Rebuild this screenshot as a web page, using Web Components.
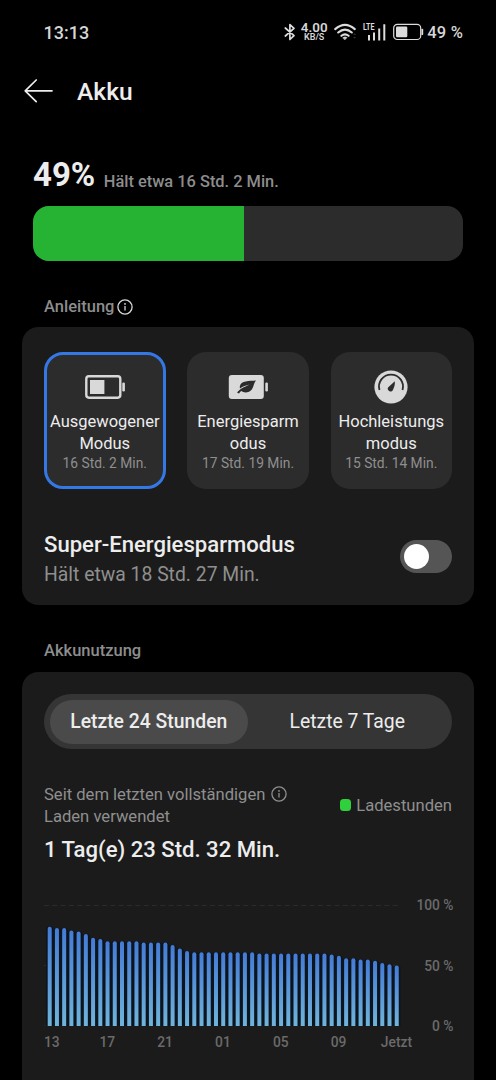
<!DOCTYPE html>
<html lang="de">
<head>
<meta charset="utf-8">
<title>Akku</title>
<style>
    html { background: #000; }
    body {
        margin: 0;
        width: 496px;
        height: 1080px;
        overflow: hidden;
        background: #000;
        color: #ededed;
        font-family: Roboto, "Liberation Sans", sans-serif;
    }
</style>
</head>
<body>

<battery-page></battery-page>

<script>
/** @class StatusBar */
class StatusBar extends HTMLElement {
    constructor() {
        super();
        this.attachShadow({ mode: 'open' });
        this.shadowRoot.innerHTML = `
        <style>
            :host {
                display: flex;
                align-items: center;
                justify-content: space-between;
                box-sizing: border-box;
                height: 64px;
                padding: 0 33px 0 43.5px;
                color: #d6d6d6;
                font-weight: 500;
            }
            .time { font-size: 18px; }
            .icons { display: flex; align-items: center; }
            svg { display: block; fill: none; stroke: #dcdcdc; }
            .speed {
                display: flex;
                flex-direction: column;
                align-items: center;
                width: 28px;
                margin: 0 6px 0 4px;
            }
            .speed b { font-size: 13.4px; font-weight: 600; line-height: 11px; }
            .speed span { font-size: 9px; font-weight: 600; line-height: 9px; }
            .signal { margin: 0 7px 0 5px; }
            .signal text {
                fill: #dcdcdc;
                stroke: none;
                font: 700 9px Roboto, sans-serif;
            }
            .percent { margin-left: 3px; font-size: 16.5px; letter-spacing: 0.2px; white-space: nowrap; }
        </style>
        <div class="time"><slot name="time"></slot></div>
        <div class="icons">
            <svg width="12" height="18" viewBox="0 0 12 18" stroke-width="1.7" stroke-linejoin="round" stroke-linecap="round">
                <path d="M1.3 5 L10 12.6 L5.9 16.5 V1.5 L10 5.4 L1.3 13"/>
            </svg>
            <div class="speed"><b>4.00</b><span>KB/S</span></div>
            <svg width="24" height="18" viewBox="0 0 24 18" stroke-width="2.1" stroke-linecap="round">
                <path d="M1.2 6.1 Q11 -2.5 20.8 6.1 M4.2 9.5 Q11 3.6 17.8 9.5 M7.4 12.8 Q11 9.8 14.6 12.8"/>
                <path d="M9.1 14.6 Q11 13.2 12.9 14.6 L11 16.6 Z" fill="#dcdcdc" stroke-width="0.7"/>
                <path d="M19 11.8 l1.6 -1.6 1.6 1.6z M19 14 l1.6 1.6 1.6 -1.6z" fill="#333" stroke="none"/>
            </svg>
            <svg class="signal" width="23" height="20" viewBox="0 0 23 20" stroke-width="2">
                <text x="0" y="7.8" textLength="11.5" lengthAdjust="spacingAndGlyphs">LTE</text>
                <path d="M6 18.6 V13 M11 18.6 V10.4 M16.2 18.6 V6.5 M21.3 18.6 V2.2"/>
            </svg>
            <svg width="31" height="18" viewBox="0 0 31 18" stroke-width="1.2">
                <rect x="0.7" y="1.3" width="27" height="15.2" rx="3.6"/>
                <rect x="3" y="3.6" width="11.3" height="10.6" rx="1.2" fill="#dcdcdc" stroke="none"/>
                <path d="M29.3 6.6 V11.2" stroke-width="1.8" stroke-linecap="round"/>
            </svg>
            <div class="percent"><slot name="percent"></slot></div>
        </div>`; }
}

/** @class TitleBar */
class TitleBar extends HTMLElement {
    constructor() {
        super();
        this.attachShadow({ mode: 'open' });
        this.shadowRoot.innerHTML = `
        <style>
            :host {
                display: flex;
                align-items: center;
                gap: 24px;
                height: 54px;
                padding-left: 24px;
            }
            svg { display: block; }
            h1 { margin: 1px 0 0; font-size: 24.6px; font-weight: 500; line-height: 30px; }
        </style>
        <svg width="29" height="24" viewBox="0 0 29 24" fill="none" stroke="#ededed" stroke-width="1.7" stroke-linecap="round" stroke-linejoin="round">
            <path d="M28 11.8 H1.2 M12.2 1 L1.2 11.8 L12.2 22.6"/>
        </svg>
        <h1><slot></slot></h1>`; }
}

/** @class BatteryLevel */
class BatteryLevel extends HTMLElement {
    constructor() {
        super();
        this.attachShadow({ mode: 'open' });
        this.shadowRoot.innerHTML = `
        <style>
            :host { display: block; padding: 37px 33px 0; }
            .text { display: flex; align-items: baseline; gap: 8.5px; height: 50.5px; line-height: 40px; }
            .level { font-size: 33px; font-weight: 700; }
            .rest { position: relative; top: 1px; color: #8d8d8d; font-size: 16.4px; font-weight: 500; }
            .track { height: 55px; border-radius: 16px; background: #2c2c2c; overflow: hidden; }
            .fill { height: 100%; background: #26b334; }
        </style>
        <div class="text">
            <span class="level"></span>
            <span class="rest"><slot></slot></span>
        </div>
        <div class="track"><div class="fill"></div></div>`; }

    connectedCallback() {
        const level = this.getAttribute( 'level' );
        this.shadowRoot.querySelector( '.level' ).textContent = level + '%';
        this.shadowRoot.querySelector( '.fill'  ).style.width = level + '%'; }
}

/** @class InfoIcon */
class InfoIcon extends HTMLElement {
    constructor() {
        super();
        this.attachShadow({ mode: 'open' });
        this.shadowRoot.innerHTML = `
        <style>
            :host { display: inline-block; width: 16px; height: 16px; }
            svg { display: block; width: 100%; height: 100%; }
        </style>
        <svg viewBox="0 0 16 16" fill="none" stroke="currentColor" stroke-width="1.3">
            <circle cx="8" cy="8" r="7.1"/>
            <path d="M8 7 V11.6"/>
            <circle cx="8" cy="4.9" r="0.9" fill="currentColor" stroke="none"/>
        </svg>`; }
}

/** @class SectionLabel */
class SectionLabel extends HTMLElement {
    constructor() {
        super();
        this.attachShadow({ mode: 'open' });
        this.shadowRoot.innerHTML = `
        <style>
            :host {
                display: flex;
                align-items: center;
                gap: 3px;
                box-sizing: border-box;
                padding-left: 44px;
                color: #8d8d8d;
                font-size: 16.5px;
                font-weight: 500;
                line-height: 20px;
            }
            ::slotted(info-icon) { color: #d8d8d8; }
        </style>
        <slot></slot>`; }
}

/** @class PanelCard */
class PanelCard extends HTMLElement {
    constructor() {
        super();
        this.attachShadow({ mode: 'open' });
        this.shadowRoot.innerHTML = `
        <style>
            :host {
                display: block;
                box-sizing: border-box;
                margin: 0 22px;
                padding: 0 22px;
                border-radius: 16.5px;
                background: #1b1b1b;
            }
        </style>
        <slot></slot>`; }
}

/** @class ModeTile */
class ModeTile extends HTMLElement {
    constructor() {
        super();
        this.attachShadow({ mode: 'open' });
        this.shadowRoot.innerHTML = `
        <style>
            :host {
                display: flex;
                flex-direction: column;
                align-items: center;
                box-sizing: border-box;
                height: 137px;
                padding-top: 14px;
                border: 3px solid transparent;
                border-radius: 19px;
                background: #2c2c2c;
                background-clip: border-box;
                text-align: center;
            }
            :host([selected]) { border-color: #3478e5; }
            .icon { display: flex; align-items: center; height: 36px; margin-bottom: 6px; }
            .name { font-size: 16.5px; line-height: 22px; white-space: nowrap; }
            .time { margin-top: -1px; color: #8f8f8f; font-size: 13.8px; line-height: 18px; white-space: nowrap; }
        </style>
        <div class="icon"><slot name="icon"></slot></div>
        <div class="name"><slot></slot></div>
        <div class="time"><slot name="time"></slot></div>`; }
}

/** @class ToggleRow */
class ToggleRow extends HTMLElement {
    constructor() {
        super();
        this.attachShadow({ mode: 'open' });
        this.shadowRoot.innerHTML = `
        <style>
            :host { display: flex; align-items: flex-start; justify-content: space-between; }
            .title { font-size: 22.1px; font-weight: 500; line-height: 30px; }
            .sub { color: #8f8f8f; font-size: 19.35px; line-height: 31px; }
            .switch {
                display: flex;
                align-items: center;
                box-sizing: border-box;
                width: 52px;
                height: 33px;
                margin-top: 11px;
                padding: 0 3.5px;
                border-radius: 17px;
                background: #555;
            }
            .knob { width: 25px; height: 25px; border-radius: 50%; background: #fff; }
        </style>
        <div>
            <div class="title"><slot></slot></div>
            <div class="sub"><slot name="sub"></slot></div>
        </div>
        <div class="switch"><div class="knob"></div></div>`; }
}

/** @class TabSwitch */
class TabSwitch extends HTMLElement {
    constructor() {
        super();
        this.attachShadow({ mode: 'open' });
        this.shadowRoot.innerHTML = `
        <style>
            :host {
                display: grid;
                grid-template-columns: 1fr 1fr;
                box-sizing: border-box;
                height: 55px;
                padding: 5.5px;
                border-radius: 28px;
                background: #353535;
            }
            ::slotted(*) {
                display: flex;
                align-items: center;
                justify-content: center;
                border-radius: 22px;
                font-size: 19.35px;
            }
            ::slotted([selected]) { background: #4a4a4a; font-weight: 500; }
        </style>
        <slot></slot>`; }
}

/** @class UsageSummary */
class UsageSummary extends HTMLElement {
    constructor() {
        super();
        this.attachShadow({ mode: 'open' });
        this.shadowRoot.innerHTML = `
        <style>
            :host { display: block; color: #8f8f8f; font-size: 16.6px; line-height: 22.4px; }
            .row { display: flex; justify-content: space-between; align-items: center; }
            .since { display: flex; gap: 6px; }
            .since info-icon { margin-top: 2px; }
            .legend { display: flex; align-items: center; gap: 5px; }
            .dot { width: 11.5px; height: 11.5px; margin-top: -3px; border-radius: 3.5px; background: #2fd03c; }
            .total { margin-top: 5px; color: #ededed; font-size: 22.1px; font-weight: 500; line-height: 30px; }
        </style>
        <div class="row">
            <div class="since"><div><slot name="since"></slot></div><info-icon></info-icon></div>
            <div class="legend"><div class="dot"></div><slot name="legend"></slot></div>
        </div>
        <div class="total"><slot name="total"></slot></div>`; }
}

/** @class UsageChart */
class UsageChart extends HTMLElement {
    constructor() {
        super();
        this.attachShadow({ mode: 'open' });
        this.shadowRoot.innerHTML = `
        <style>
            :host {
                display: grid;
                grid-template-columns: 357px 1fr;
                color: #6a6a6a;
                font-size: 13.8px;
                font-weight: 500;
                line-height: 18px;
            }
            svg { display: block; }
            .scale {
                display: flex;
                flex-direction: column;
                justify-content: space-between;
                height: 139px;
                margin-top: -8.5px;
                margin-right: -1.5px;
                text-align: right;
            }
            .hours { display: flex; margin-top: -2.5px; }
            .hours span { display: flex; flex: 0 0 57.84px; justify-content: center; }
            .hours span:first-child { flex-basis: 34.4px; justify-content: flex-start; }
        </style>
        <svg width="357" height="121" viewBox="0 0 357 121"></svg>
        <div class="scale"><span>100 %</span><span>50 %</span><span>0 %</span></div>
        <div class="hours"></div>`; }

    connectedCallback() {
        const levels = this.getAttribute( 'levels' ).split( ',' ).map( Number );
        const hours  = this.getAttribute( 'hours'  ).split( ',' );
        const column = ( level, i, left, width ) => {
            const x = ( left + i * 7.23 ).toFixed( 2 );
            const y = ( 123 - level * 1.21 ).toFixed( 2 );
            const r = width / 2;
            return `<path d="M${ x } 121 V${ y } q0 -2 ${ r } -2 t${ r } 2 V121 z"/>`; };
        const bars   = levels.map( ( level, i ) => column( level, i, 3.7, 4   ) ).join( '' );
        const gutter = levels.map( ( level, i ) => column( level, i, 2.1, 7.3 ) ).join( '' );

        this.shadowRoot.querySelector( 'svg' ).innerHTML = `
            <linearGradient id="bar" x1="0" y1="0" x2="0" y2="1">
                <stop offset="0" stop-color="#447bd6"/>
                <stop offset="1" stop-color="#70b4da"/>
            </linearGradient>
            <path d="M0 0.5 H356 M0 60.5 H356" stroke="#2b2b2b" stroke-dasharray="5 3.3"/>
            <path d="M0 120.5 H356" stroke="#242424"/>
            <g fill="#0c151f">${ gutter }</g>
            <g fill="url(#bar)">${ bars }</g>`;
        this.shadowRoot.querySelector( '.hours' ).innerHTML = hours.map( h => `<span>${ h }</span>` ).join( '' ); }
}

/** @class BatteryPage */
class BatteryPage extends HTMLElement {
    constructor() {
        super();
        this.attachShadow({ mode: 'open' });
        this.shadowRoot.innerHTML = `
        <style>
            :host { display: block; }
            .guide { height: 44.5px; margin-top: 22px; padding-top: 4px; }
            .usage-label { height: 67px; padding-top: 25px; }
            .modes-card { height: 278px; padding-top: 25px; }
            .modes { display: grid; grid-template-columns: repeat(3, 121.5px); justify-content: space-between; }
            toggle-row { margin-top: 40px; }
            .usage-card { height: 440px; padding-top: 22px; }
            usage-summary { margin-top: 35px; }
            usage-chart { margin-top: 41px; }
            svg { display: block; }
        </style>
        <status-bar>
            <span slot="time">13:13</span>
            <span slot="percent">49 %</span>
        </status-bar>
        <title-bar>Akku</title-bar>
        <battery-level level="49">Hält etwa 16 Std. 2 Min.</battery-level>

        <section-label class="guide">Anleitung<info-icon></info-icon></section-label>
        <panel-card class="modes-card">
            <div class="modes">
                <mode-tile selected>
                    <svg slot="icon" width="40" height="24" viewBox="0 0 40 24">
                        <rect x="1.3" y="1.3" width="34" height="21.4" rx="2.6" fill="none" stroke="#d9d9d9" stroke-width="2.4"/>
                        <rect x="5" y="5" width="14.4" height="14" fill="#d9d9d9"/>
                        <rect x="37.3" y="7.5" width="2.6" height="9" rx="1.2" fill="#d9d9d9"/>
                    </svg>
                    Ausgewogener<br>Modus
                    <span slot="time">16 Std. 2 Min.</span>
                </mode-tile>
                <mode-tile>
                    <svg slot="icon" width="40" height="24" viewBox="0 0 40 24">
                        <rect x="0.8" width="35" height="24" rx="3" fill="#d9d9d9"/>
                        <rect x="37.3" y="7.5" width="2.6" height="9" rx="1.2" fill="#d9d9d9"/>
                        <path d="M28 5.4 C21.5 6 12.6 5.4 11.8 11.4 C11.7 12.2 11.8 12.8 12 13.4 C14.8 11.2 18 10.4 21.6 9.4 C16 12 11 14.2 9.1 17.8 L11.1 18.6 C11.7 17.4 12.4 16.6 13.2 16.1 C16.5 18.4 21.4 17.6 23.8 14.4 C26 11.6 25.4 8.2 28 5.4 Z" fill="#2c2c2c"/>
                    </svg>
                    Energiesparm<br>odus
                    <span slot="time">17 Std. 19 Min.</span>
                </mode-tile>
                <mode-tile>
                    <svg slot="icon" width="34" height="34" viewBox="0 0 34 34">
                        <circle cx="17" cy="17" r="16.6" fill="#d9d9d9"/>
                        <path d="M5.5 20 A12 12 0 1 1 28.5 20" fill="none" stroke="#2c2c2c" stroke-width="1.8"/>
                        <path d="M20.8 11.2 C21.2 14.6 20.2 17.2 18.8 20.2 C17.4 22.6 13.6 21.4 13.7 18.6 C13.8 17.6 14.6 16.8 15.4 16.2 Z" fill="#2c2c2c"/>
                    </svg>
                    Hochleistungs<br>modus
                    <span slot="time">15 Std. 14 Min.</span>
                </mode-tile>
            </div>
            <toggle-row>
                Super-Energiesparmodus
                <span slot="sub">Hält etwa 18 Std. 27 Min.</span>
            </toggle-row>
        </panel-card>

        <section-label class="usage-label">Akkunutzung</section-label>
        <panel-card class="usage-card">
            <tab-switch>
                <span selected>Letzte 24 Stunden</span>
                <span>Letzte 7 Tage</span>
            </tab-switch>
            <usage-summary>
                <span slot="since">Seit dem letzten vollständigen<br>Laden verwendet</span>
                <span slot="legend">Ladestunden</span>
                <span slot="total">1 Tag(e) 23 Std. 32 Min.</span>
            </usage-summary>
            <usage-chart
                hours="13,17,21,01,05,09,Jetzt"
                levels="82,81,81,79,78,76,73,72,70,70,70,70,70,69,69,69,69,67,64,62,61,61,61,61,61,61,61,61,61,60,60,60,60,60,60,60,60,60,60,59,58,56,56,55,55,54,52,51,50">
            </usage-chart>
        </panel-card>`; }
}

customElements.define( 'info-icon',     InfoIcon     );
customElements.define( 'status-bar',    StatusBar    );
customElements.define( 'title-bar',     TitleBar     );
customElements.define( 'battery-level', BatteryLevel );
customElements.define( 'section-label', SectionLabel );
customElements.define( 'panel-card',    PanelCard    );
customElements.define( 'mode-tile',     ModeTile     );
customElements.define( 'toggle-row',    ToggleRow    );
customElements.define( 'tab-switch',    TabSwitch    );
customElements.define( 'usage-summary', UsageSummary );
customElements.define( 'usage-chart',   UsageChart   );
customElements.define( 'battery-page',  BatteryPage  );
</script>
</body>
</html>
